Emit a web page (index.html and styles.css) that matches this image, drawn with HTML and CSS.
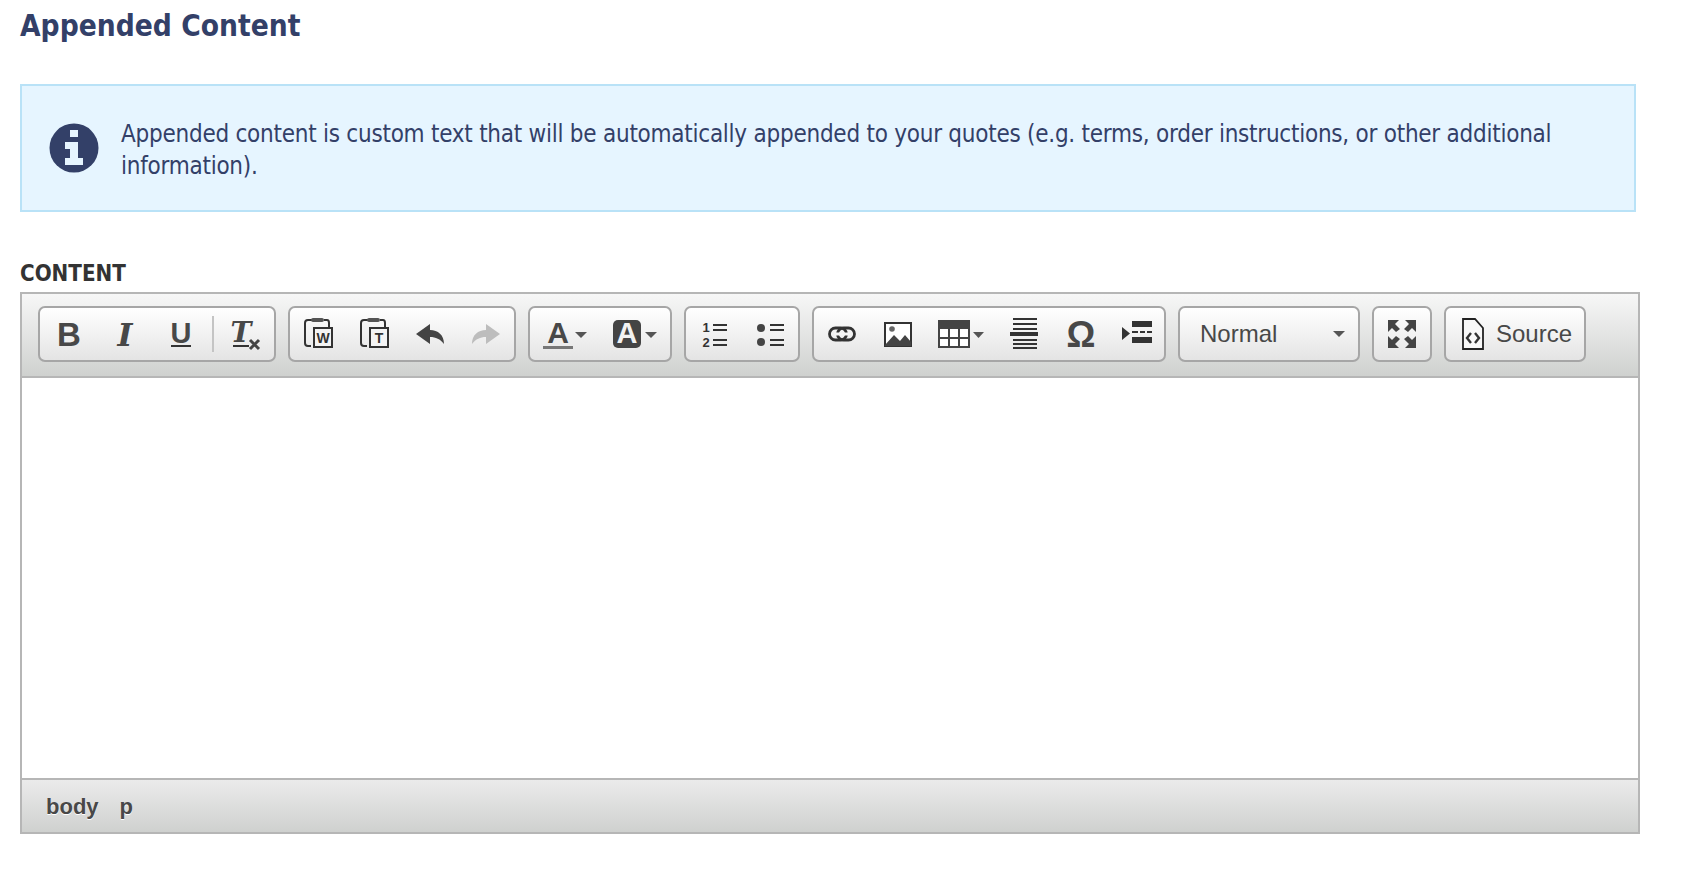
FILE: index.html
```html
<!DOCTYPE html>
<html lang="en">
<head>
<meta charset="utf-8">
<title>Appended Content</title>
<link rel="stylesheet" href="styles.css">
</head>
<body>
<h1 class="title">Appended Content</h1>
<div class="alert">
  <svg class="alert-icon" width="50" height="50" viewBox="0 0 50 50"><ellipse cx="25" cy="25" rx="24.500" ry="24.500" fill="#334068"/><path fill="#e6f5ff" d="M21 7h8v7h-8zM16 19h13v16h5v7H16v-7h5v-9h-5z"/></svg>
  <p class="alert-text">Appended content is custom text that will be automatically appended to your quotes (e.g. terms, order instructions, or other additional information).</p>
</div>
<div class="field-label">CONTENT</div>
<div class="editor">
  <div class="toolbar">
    <div class="group first">
      <span class="btn"><svg class="ic" width="32" height="32" viewBox="0 0 32 32"><text class="g-bold" x="16" y="28" text-anchor="middle">B</text></svg></span>
      <span class="btn"><svg class="ic" width="32" height="32" viewBox="0 0 32 32"><text class="g-ital" x="16" y="28" text-anchor="middle">I</text></svg></span>
      <span class="btn"><svg class="ic" width="32" height="32" viewBox="0 0 32 32"><text class="g-under" x="16" y="25" text-anchor="middle">U</text><rect x="6" y="27" width="20" height="2" fill="#333"/></svg></span>
      <span class="sep"></span>
      <span class="btn"><svg class="ic" width="32" height="32" viewBox="0 0 32 32"><text class="g-clear" x="11" y="24" text-anchor="middle">T</text><rect x="3" y="27" width="16" height="2" fill="#333"/><path d="M20 22l9 9M29 22l-9 9" stroke="#444" stroke-width="3" fill="none"/></svg></span>
    </div>
    <div class="group">
      <span class="btn"><svg class="ic" width="32" height="32" viewBox="0 0 32 32"><path d="M10 2H6Q3 2 3 5V25Q3 28 6 28H9M22 2H25Q27 2 27 5V9" fill="none" stroke="#333" stroke-width="2"/><rect x="9" y="0" width="13" height="4" rx="2" fill="#555"/><rect x="12" y="10" width="18" height="19" fill="#f4f4f4" stroke="#333" stroke-width="2"/><text class="g-small" x="21" y="25" text-anchor="middle">W</text></svg></span>
      <span class="btn"><svg class="ic" width="32" height="32" viewBox="0 0 32 32"><path d="M10 2H6Q3 2 3 5V25Q3 28 6 28H9M22 2H25Q27 2 27 5V9" fill="none" stroke="#333" stroke-width="2"/><rect x="9" y="0" width="13" height="4" rx="2" fill="#555"/><rect x="12" y="10" width="18" height="19" fill="#f4f4f4" stroke="#333" stroke-width="2"/><text class="g-small" x="21" y="25" text-anchor="middle">T</text></svg></span>
      <span class="btn"><svg class="ic" width="32" height="32" viewBox="0 0 32 32"><path fill="#444" d="M2 16L16 6V12C24 12 30 17 30 26C26 21 22 19 16 19V26Z"/></svg></span>
      <span class="btn"><svg class="ic" width="32" height="32" viewBox="0 0 32 32"><path fill="#bdbdbd" d="M30 16L16 6V12C8 12 2 17 2 26C6 21 10 19 16 19V26Z"/></svg></span>
    </div>
    <div class="group">
      <span class="btn wide"><svg class="ic" width="44" height="32" viewBox="0 0 44 32"><text class="g-a" x="15" y="25" text-anchor="middle">A</text><rect x="0" y="28" width="30" height="3" fill="#777"/><path d="M32 14h12l-6 6z" fill="#555"/></svg></span>
      <span class="btn wide"><svg class="ic" width="44" height="32" viewBox="0 0 44 32"><rect x="0" y="2" width="28" height="28" rx="5" fill="#444"/><text class="g-a-inv" x="14" y="25" text-anchor="middle">A</text><path d="M32 14h12l-6 6z" fill="#555"/></svg></span>
    </div>
    <div class="group">
      <span class="btn"><svg class="ic" width="32" height="32" viewBox="0 0 32 32"><text class="g-num" x="8" y="14" text-anchor="middle">1</text><text class="g-num" x="8" y="29" text-anchor="middle">2</text><path fill="#333" d="M15 6h14v2H15zM15 11h14v2H15zM15 21h14v2H15zM15 26h14v2H15z"/></svg></span>
      <span class="btn"><svg class="ic" width="32" height="32" viewBox="0 0 32 32"><circle cx="7" cy="10" r="4" fill="#444"/><circle cx="7" cy="24" r="4" fill="#444"/><path fill="#333" d="M16 6h14v2H16zM16 11h14v2H16zM16 21h14v2H16zM16 26h14v2H16z"/></svg></span>
    </div>
    <div class="group">
      <span class="btn"><svg class="ic" width="32" height="32" viewBox="0 0 32 32"><rect x="3.500" y="10" width="17" height="12" rx="6" fill="none" stroke="#333" stroke-width="2.800"/><rect x="11.500" y="10" width="17" height="12" rx="6" fill="none" stroke="#333" stroke-width="2.800"/><rect x="8" y="14.500" width="16" height="3" fill="#f6f6f6"/></svg></span>
      <span class="btn"><svg class="ic" width="32" height="32" viewBox="0 0 32 32"><rect x="3" y="5" width="26" height="23" fill="#fff" stroke="#333" stroke-width="2"/><circle cx="10" cy="11" r="2.800" fill="#666"/><path fill="#444" d="M3 27L12 17L18 23L23 17L29 24V28H3Z"/></svg></span>
      <span class="btn wide"><svg class="ic" width="46" height="32" viewBox="0 0 46 32"><rect x="0" y="2" width="32" height="28" fill="#444"/><path fill="#fff" d="M2 11h8v8H2zM12 11h8v8h-8zM22 11h8v8h-8zM2 21h8v7H2zM12 21h8v7h-8zM22 21h8v7h-8z"/><path d="M35 14h11l-5.500 6z" fill="#555"/></svg></span>
      <span class="btn"><svg class="ic" width="32" height="32" viewBox="0 0 32 32"><path fill="#333" d="M5 0h24v2H5zM5 5h24v2H5zM5 10h24v2H5zM2 14h28v4H2zM5 21h24v2H5zM5 25h24v2H5zM5 29h24v2H5z"/></svg></span>
      <span class="btn"><svg class="ic" width="32" height="32" viewBox="0 0 32 32"><text class="g-omega" x="17" y="29" text-anchor="middle">Ω</text></svg></span>
      <span class="btn"><svg class="ic" width="32" height="32" viewBox="0 0 32 32"><path fill="#333" d="M2 9l8 6.500-8 6.500zM12 3h20v6H12zM12 13h6v2h-6zM20 13h5v2h-5zM27 13h5v2h-5zM12 19h20v6H12z"/></svg></span>
    </div>
    <div class="group combo"><span class="combo-text">Normal</span><span class="caret"></span></div>
    <div class="group full">
      <span class="btn fill"><svg class="ic" width="32" height="32" viewBox="0 0 32 32"><path fill="#444" d="M2 2H13L9 6L14 11L10 14L6 10L2 14ZM30 2H19L23 6L18 11L22 14L26 10L30 14ZM2 30H13L9 26L14 21L10 18L6 22L2 18ZM30 30H19L23 26L18 21L22 18L26 22L30 18Z"/></svg></span>
    </div>
    <div class="group source">
      <svg class="ic" width="22" height="32" viewBox="0 0 22 32"><path d="M1 1H13L21 10V31H1Z" fill="#f8f8f8" stroke="#222" stroke-width="1.800"/><path d="M9 15L5 20L9 25M13 15L17 20L13 25" fill="none" stroke="#333" stroke-width="2.400"/></svg>
      <span class="source-text">Source</span>
    </div>
  </div>
  <div class="editable"></div>
  <div class="statusbar"><span>body</span><span>p</span></div>
</div>
</body>
</html>
```
FILE: styles.css
```css
* { box-sizing: border-box; }
html, body { margin: 0; padding: 0; background: #fff; }
body { padding: 9px 44px 0 20px; height: 870px; overflow: hidden; font-family: "DejaVu Sans", "Noto Sans", sans-serif; font-stretch: condensed; }
.title { margin: 0 0 41px; font-size: 29.600px; line-height: 34px; font-weight: 700; color: #334068; }
.alert { display: flex; align-items: center; gap: 22px; width: 1616px; height: 128px; padding-left: 27px; background: #e6f5ff; border: 2px solid #b9e2f7; }
.alert-icon { flex: none; }
.alert-text { margin: 0; font-size: 24px; line-height: 32px; letter-spacing: -0.25px; color: #334068; padding-top: 3px; }
.field-label { margin: 48px 0 6px; font-size: 22.200px; line-height: 26px; font-weight: 700; color: #333; }
.editor { width: 1620px; height: 542px; display: flex; flex-direction: column; border: 2px solid #b6b6b6; }
.toolbar { flex: none; height: 84px; display: flex; align-items: flex-start; gap: 12px; padding: 12px 0 0 16px; border-bottom: 2px solid #b6b6b6; background: linear-gradient(#f7f7f7, #cfd1cf); }
.group { flex: none; display: flex; align-items: center; height: 56px; border: 2px solid #a6a6a6; border-radius: 7px; background: linear-gradient(#fff, #e4e4e4); }
.group.first { padding: 0 1px; width: 238px; }
.btn { flex: none; width: 56px; height: 52px; display: flex; align-items: center; justify-content: center; }
.btn.wide { width: 70px; }
.btn.fill { width: 100%; }
.sep { flex: none; width: 2px; height: 36px; margin: 0 4px 0 3px; background: #c4c4c4; }
.ic { display: block; flex: none; overflow: visible; }
.g-bold { font: 700 33px "Liberation Sans", sans-serif; fill: #484848; }
.g-ital { font: italic 700 32px "DejaVu Serif", serif; fill: #484848; }
.g-under { font: 700 29px "Liberation Sans", sans-serif; fill: #484848; }
.g-clear { font: italic 700 28px "DejaVu Serif", serif; fill: #484848; }
.g-small { font: 700 14px "Liberation Sans", sans-serif; fill: #333; }
.g-a { font: 700 30px "Liberation Sans", sans-serif; fill: #484848; }
.g-a-inv { font: 700 29px "Liberation Sans", sans-serif; fill: #f2f2f2; }
.g-num { font: 700 13px "Liberation Sans", sans-serif; fill: #333; }
.g-omega { font: 700 36px "Liberation Sans", sans-serif; fill: #484848; }
.combo { width: 182px; padding: 0 13px 0 20px; justify-content: space-between; }
.combo-text, .source-text { font: 24px/1 "Liberation Sans", sans-serif; color: #484848; }
.caret { width: 0; height: 0; border-style: solid; border-width: 6px 6px 0; border-color: #555 transparent transparent; }
.full { width: 60px; }
.source { width: 142px; padding-left: 16px; gap: 12px; }
.editable { flex: 1; background: #fff; }
.statusbar { flex: none; height: 54px; display: flex; align-items: center; gap: 21px; padding: 2px 0 0 24px; border-top: 2px solid #b6b6b6; background: linear-gradient(#ebebeb, #cfd1cf); font: 700 22px "Liberation Sans", sans-serif; color: #484848; text-shadow: 0 1px 0 #fff; }
```
